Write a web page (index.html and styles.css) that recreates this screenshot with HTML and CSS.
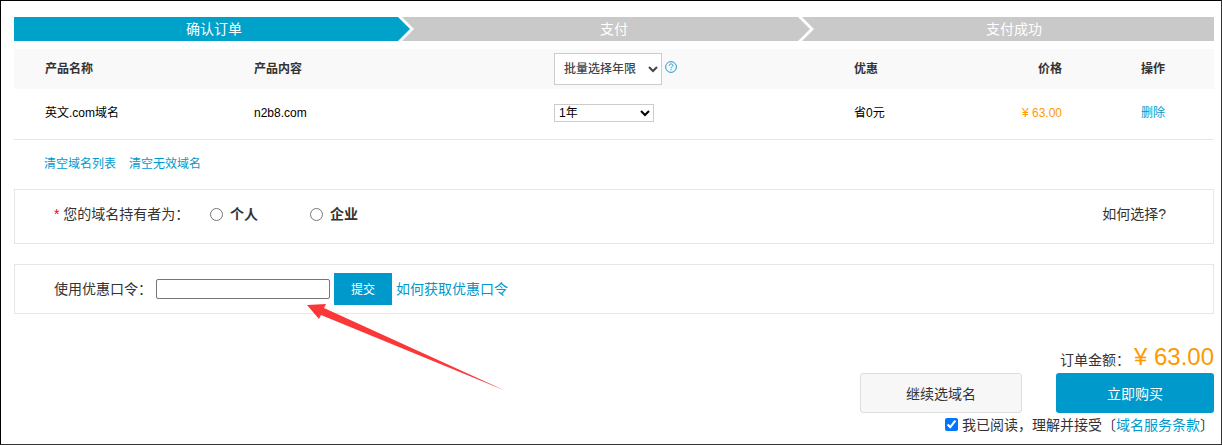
FILE: index.html
```html
<!DOCTYPE html>
<html lang="zh-CN">
<head>
    <meta charset="UTF-8">
    <meta name="viewport" content="width=device-width, initial-scale=1.0">
    <title>确认订单</title>
    <link rel="stylesheet" href="styles.css">
</head>
<body>
    <!-- 步骤条 -->
    <ol class="steps">
        <li class="step active">
            <span>确认订单</span>
            <svg class="step-arrow" viewBox="0 0 16 24" aria-hidden="true">
                <path class="arrow-next" d="M0 0H16V24H0Z"/>
                <path class="arrow-gap" d="M0 0H4L16 12L4 24H0Z"/>
                <path class="arrow-done" d="M0 0L12 12L0 24Z"/>
            </svg>
        </li>
        <li class="step">
            <span>支付</span>
            <svg class="step-arrow" viewBox="0 0 16 24" aria-hidden="true">
                <path class="arrow-gap" d="M0 0H4L16 12L4 24H0L12 12Z"/>
            </svg>
        </li>
        <li class="step last">
            <span>支付成功</span>
        </li>
    </ol>

    <!-- 订单列表 -->
    <table class="order-table">
        <thead>
            <tr>
                <th class="col-name">产品名称</th>
                <th class="col-content">产品内容</th>
                <th class="col-year">
                    <div class="year-batch">
                        <select class="batch-select" aria-label="批量选择年限">
                            <option>批量选择年限</option>
                            <option>1年</option>
                            <option>2年</option>
                            <option>3年</option>
                        </select>
                        <svg class="help-icon" viewBox="0 0 12 12" aria-hidden="true">
                            <circle cx="6" cy="6" r="5.4"/>
                            <path d="M4.2 4.7C4.2 3.5 5 2.9 6 2.9C7.1 2.9 7.8 3.6 7.8 4.5C7.8 5.8 6 5.8 6 7.3M6 8.2V9.3"/>
                        </svg>
                    </div>
                </th>
                <th class="col-discount">优惠</th>
                <th class="col-price">价格</th>
                <th class="col-action">操作</th>
            </tr>
        </thead>
        <tbody>
            <tr>
                <td class="col-name">英文.com域名</td>
                <td class="col-content">n2b8.com</td>
                <td class="col-year">
                    <select class="year-select" aria-label="年限">
                        <option>1年</option>
                        <option>2年</option>
                        <option>3年</option>
                    </select>
                </td>
                <td class="col-discount">省0元</td>
                <td class="col-price">¥ 63.00</td>
                <td class="col-action"><a href="#">删除</a></td>
            </tr>
        </tbody>
    </table>

    <div class="list-links">
        <a href="#">清空域名列表</a>
        <a href="#">清空无效域名</a>
    </div>

    <!-- 域名持有者 -->
    <div class="panel owner-panel">
        <span class="owner-title"><em>*</em> 您的域名持有者为：</span>
        <label class="owner-option"><input type="radio" name="owner">个人</label>
        <label class="owner-option"><input type="radio" name="owner">企业</label>
        <span class="owner-help">如何选择?</span>
    </div>

    <!-- 优惠口令 -->
    <div class="panel coupon-panel">
        <label for="coupon">使用优惠口令：</label>
        <input type="text" id="coupon" class="coupon-input">
        <button type="button" class="coupon-btn">提交</button>
        <a href="#">如何获取优惠口令</a>
        <svg class="pointer" viewBox="0 0 200 88" aria-hidden="true">
            <path d="M0 1L19 0L17 4L199 87L14 11L12 15Z"/>
        </svg>
    </div>

    <!-- 结算 -->
    <div class="checkout">
        <div class="total">订单金额：<strong>¥ 63.00</strong></div>
        <div class="checkout-buttons">
            <button type="button" class="btn-continue">继续选域名</button>
            <button type="button" class="btn-buy">立即购买</button>
        </div>
        <div class="agreement">
            <input type="checkbox" id="agree" checked>
            <label for="agree">我已阅读，理解并接受</label><span>〔<a href="#">域名服务条款</a>〕</span>
        </div>
    </div>
</body>
</html>
```

FILE: styles.css
```css
* {
    box-sizing: border-box;
}

body {
    min-height: 100vh;
    margin: 0;
    padding: 16px 7px 0 13px;
    border: 1px solid #333;
    border-top-color: #000;
    border-left-color: #000;
    background-color: #fff;
    color: #333;
    font-family: "Liberation Sans", "Noto Sans CJK SC", sans-serif;
    font-size: 14px;
    line-height: 20px;
}

a {
    color: #0099cc;
    text-decoration: none;
}

input, select, button {
    margin: 0;
    font-family: inherit;
}

/* 步骤条 */
.steps {
    display: flex;
    margin: 0 0 8px;
    padding: 0;
    list-style: none;
}

.step {
    display: flex;
    width: calc(100% / 3);
    height: 24px;
    padding-left: 16px;
    background-color: #c9c9c9;
    color: #fff;
    line-height: 24px;
    text-align: center;
}

.step.active {
    background-color: #00a2ca;
}

.step.last {
    padding-left: 0;
}

.step span {
    flex: 1;
}

.step-arrow {
    width: 16px;
    height: 24px;
}

.arrow-next {
    fill: #c9c9c9;
}

.arrow-gap {
    fill: #fff;
}

.arrow-done {
    fill: #00a2ca;
}

/* 订单列表 */
.order-table {
    width: 100%;
    table-layout: fixed;
    border-collapse: collapse;
    font-size: 12px;
    text-align: left;
}

.order-table th {
    height: 40px;
    padding: 0;
    background-color: #f9f9f9;
}

.order-table td {
    height: 50px;
    padding: 0 0 1px;
    border-bottom: 1px solid #e6e6e6;
    color: #000;
}

.order-table .col-name {
    width: 20%;
    padding-left: 31px;
}

.order-table .col-content,
.order-table .col-year {
    width: 25%;
}

.order-table .col-discount {
    width: 8%;
}

.order-table .col-price {
    width: 10%;
    padding-right: 8px;
    text-align: right;
}

.order-table td.col-price {
    color: #ff9900;
}

.order-table .col-action {
    width: 12%;
    padding-left: 71px;
}

.year-batch {
    display: flex;
    align-items: center;
    gap: 3px;
}

.batch-select {
    width: 108px;
    height: 32px;
    padding: 0 5px;
    border: 1px solid #ccc;
    background-color: #fff;
    color: #444;
    font-size: 12px;
    font-weight: 500;
}

.year-select {
    display: block;
    width: 100px;
    height: 18px;
    border: 1px solid #ccc;
    background-color: #fff;
    color: #000;
    font-size: 12px;
}

.help-icon {
    width: 12px;
    height: 12px;
    margin-bottom: 4px;
    fill: none;
    stroke: #1a9fd0;
}

.list-links {
    display: flex;
    gap: 13px;
    padding: 14px 30px 15px;
    font-size: 12px;
}

/* 面板 */
.panel {
    display: flex;
    align-items: center;
    margin-bottom: 20px;
    padding: 0 47px 0 39px;
    border: 1px solid #e6e6e6;
}

.owner-panel {
    height: 55px;
    padding-bottom: 4px;
}

.owner-title {
    width: 156px;
}

.owner-title em {
    color: #f00;
    font-style: normal;
}

.owner-option {
    display: flex;
    align-items: center;
    gap: 7px;
    width: 100px;
    font-weight: bold;
}

.owner-option input {
    width: 13px;
    height: 13px;
}

.owner-help {
    margin-left: auto;
}

.coupon-panel {
    position: relative;
    gap: 4px;
    height: 50px;
}

.coupon-input {
    width: 174px;
    height: 20px;
    border: 1px solid #767676;
    border-radius: 2px;
}

.coupon-btn {
    width: 58px;
    height: 32px;
    padding: 0;
    border: none;
    background-color: #0099cc;
    color: #fff;
    font-size: 12px;
    cursor: pointer;
}

/* 指向输入框的箭头 */
.pointer {
    position: absolute;
    top: 39px;
    left: 292px;
    width: 200px;
    height: 88px;
    fill: #fb3838;
}

/* 结算 */
.checkout {
    display: flex;
    flex-direction: column;
    align-items: flex-end;
    padding-top: 10px;
}

.total {
    display: flex;
    align-items: baseline;
    line-height: 26px;
}

.total strong {
    margin-left: 4px;
    color: #ff9900;
    font-size: 24px;
    font-weight: normal;
}

.checkout-buttons {
    display: flex;
    gap: 34px;
}

.checkout-buttons button {
    height: 40px;
    border-radius: 3px;
    font-size: 14px;
    cursor: pointer;
}

.btn-continue {
    width: 162px;
    border: 1px solid #ddd;
    background-color: #f7f7f7;
    color: #333;
}

.btn-buy {
    width: 158px;
    border: none;
    background-color: #0099cc;
    color: #fff;
}

.agreement {
    display: flex;
    align-items: center;
    padding-top: 2px;
}

.agreement input {
    width: 13px;
    height: 13px;
    margin-right: 4px;
}
```
